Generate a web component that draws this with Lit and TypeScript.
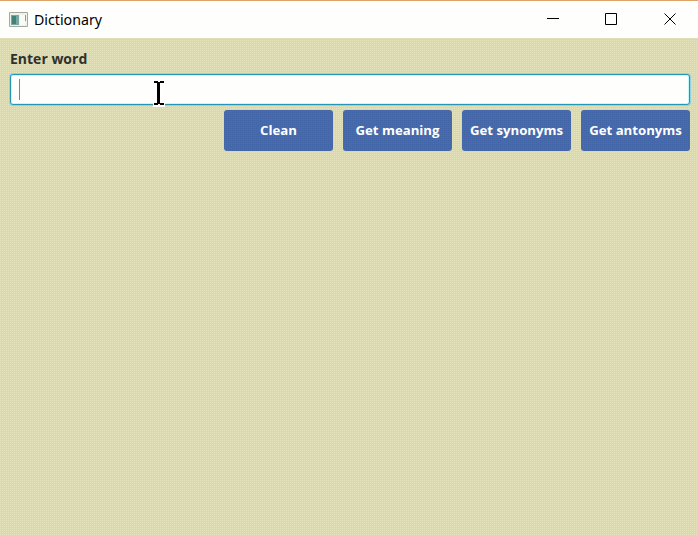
import { LitElement, html, css, svg } from "lit";
import { customElement } from "lit/decorators.js";

@customElement("app-root")
export class AppRoot extends LitElement {
  static styles = css`
    :host {
      display: flex;
      flex-direction: column;
      position: relative;
      box-sizing: border-box;
      width: 100%;
      height: 100vh;
      overflow: hidden;
      background: conic-gradient(from 270deg at 1px 1px, #e5e4bc 90deg, #d4d3da 0) 0 0 / 2px 2px;
      font-family: "Open Sans", "Noto Sans", sans-serif;
    }
    .titlebar {
      display: flex;
      align-items: center;
      box-sizing: border-box;
      height: 38px;
      flex: none;
      border-top: 1px solid #dca468;
      background: #fefefc;
      padding-left: 9px;
    }
    .app-icon { display: block; margin-right: 6px; }
    .title { flex: 1; font-family: "Noto Sans", sans-serif; font-size: 14.2px; line-height: 20px; color: #000; }
    .controls { display: flex; }
    .control { display: flex; width: 58px; justify-content: center; }
    .control:last-child { width: 59px; margin-right: -1px; }
    .control svg { display: block; position: relative; top: -1px; }
    main { display: flex; flex-direction: column; padding: 11px 8px 0 10px; }
    label { font-size: 14px; line-height: 20px; font-weight: 700; color: #30302c; }
    .field {
      display: flex;
      align-items: center;
      box-sizing: border-box;
      height: 31px;
      margin-top: 5px;
      padding-left: 8px;
      border: 1px solid #2795b5;
      border-radius: 3px;
      background: #fefefc;
      box-shadow: 0 0 0 1px #93d2e4, inset 0 0 0 1px #c5f6f8;
    }
    .caret { width: 1px; height: 21px; background: #85857c; }
    .actions { display: flex; justify-content: flex-end; gap: 10px; margin-top: 5px; }
    button {
      width: 109px; height: 41px; padding: 0 0 2px; border: 0; border-radius: 3px;
      background: conic-gradient(from 270deg at 1px 1px, #4164a6 90deg, #4564dc 0) 0 0 / 2px 2px fixed;
      color: #fff; white-space: nowrap;
      font: 700 13.2px/20px "Open Sans", sans-serif;
    }
    .cursor { position: absolute; left: 153px; top: 80px; }
  `;

  render() {
    return html`
      <header class="titlebar">
        <svg class="app-icon" width="19" height="16" viewBox="0 0 19 16">
          <path d="M.5 .5h18v14h-18z" fill="#eef0ea" stroke="#a2ac9d" />
          <path d="M2 3h8v10H2z" fill="#74a8a0" />
          <path d="M3 4h4v8H3z" fill="#408278" />
          <path d="M11 3h5v10h-5z" fill="#fafaf6" />
          <path d="M16.5 3v6" stroke="#78ad82" />
        </svg>
        <div class="title">Dictionary</div>
        <div class="controls">
          ${["M0 5.5h12", "M.5 .5h11v11H.5z", "M.5 .5l11 11M11.5 .5L.5 11.5"].map(
            (d) => html`<div class="control">
              <svg width="12" height="12" viewBox="0 0 12 12" overflow="visible" fill="none" stroke="#000">${svg`<path d=${d} />`}</svg>
            </div>`
          )}
        </div>
      </header>
      <main>
        <label>Enter word</label>
        <div class="field"><i class="caret"></i></div>
        <div class="actions">
          ${["Clean", "Get meaning", "Get synonyms", "Get antonyms"].map((t) => html`<button>${t}</button>`)}
        </div>
      </main>
      <svg class="cursor" width="13" height="28" viewBox="0 0 13 28">
        <path d="M0 0h12v4H8v19h4v4H0v-4h3V4H0z" fill="#fff" />
        <path d="M1 1h4v1h2V1h4v2H7v20h4v2H7v-1H5v1H1v-2h3V3H1z" fill="#000" />
      </svg>
    `;
  }
}
